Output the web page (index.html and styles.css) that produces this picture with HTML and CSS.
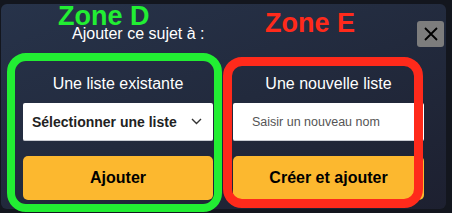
FILE: index.html
```html
<!DOCTYPE html>
<html lang="fr">
<head>
<meta charset="utf-8">
<link rel="stylesheet" href="styles.css">
</head>
<body>
<div class="modal">
  <div class="title">Ajouter ce sujet à :</div>
  <button class="close" aria-label="Fermer">
    <svg width="14" height="14" viewBox="0 0 14 14"><path d="M1 1 L13 13 M13 1 L1 13" stroke="#000" stroke-width="1.8" fill="none"/></svg>
  </button>
  <div class="columns">
    <div class="col">
      <div class="label">Une liste existante</div>
      <div class="select">
        <span>Sélectionner une liste</span>
        <svg class="chev" width="11" height="7" viewBox="0 0 11 7"><path d="M1 1 L5.5 5.5 L10 1" stroke="#333" stroke-width="1.4" fill="none"/></svg>
      </div>
      <button class="btn">Ajouter</button>
    </div>
    <div class="col">
      <div class="label">Une nouvelle liste</div>
      <div class="input">Saisir un nouveau nom</div>
      <button class="btn">Créer et ajouter</button>
    </div>
  </div>
</div>
<div class="zone zone-d"></div>
<div class="zone zone-e"></div>
<div class="zlabel zlabel-d">Zone D</div>
<div class="zlabel zlabel-e">Zone E</div>
</body>
</html>
```
FILE: styles.css
```css
html, body {
  margin: 0;
  padding: 0;
}
body {
  width: 452px;
  height: 213px;
  background: #13161e;
  font-family: "Liberation Sans", Arial, sans-serif;
  position: relative;
  overflow: hidden;
  padding: 4px 0 0 1px;
  box-sizing: border-box;
}
.modal {
  position: relative;
  width: 445px;
  height: 205px;
  box-sizing: border-box;
  border-radius: 6px;
  background: linear-gradient(160deg, #27334a 0%, #222a3d 50%, #1d2030 100%);
  padding: 22px 22px 10px 22px;
}
.title {
  color: #fff;
  font-size: 16px;
  line-height: 16px;
  padding-left: 49px;
}
.close {
  position: absolute;
  right: 2px;
  top: 17px;
  width: 27px;
  height: 26px;
  border: 0;
  border-radius: 3px;
  background: #7d7d7d;
  padding: 0;
  display: flex;
  align-items: center;
  justify-content: center;
}
.columns {
  display: flex;
  gap: 20px;
  margin-top: 32px;
}
.col {
  display: flex;
  flex-direction: column;
  width: 190px;
}
.col + .col {
  width: 191px;
}
.label {
  color: #fff;
  font-size: 16px;
  line-height: 20px;
  text-align: center;
}
.select, .input {
  margin-top: 9px;
  height: 38px;
  box-sizing: border-box;
  background: #fff;
  border-radius: 2px;
  border-bottom: 1px solid #c9ccd3;
  display: flex;
  align-items: center;
}
.select {
  padding: 0 11px 0 9px;
  justify-content: space-between;
  font-weight: bold;
  font-size: 14px;
  color: #222;
}
.chev {
  display: block;
}
.input {
  padding-left: 19px;
  font-size: 12.5px;
  color: #555;
}
.btn {
  margin-top: 15px;
  height: 44px;
  border: 0;
  border-radius: 5px;
  background: #fcb82f;
  color: #000;
  font-family: "Liberation Sans", Arial, sans-serif;
  font-weight: bold;
  font-size: 16px;
  padding: 0;
}
.zone {
  position: absolute;
  box-sizing: border-box;
  border-radius: 19px;
}
.zone-d {
  left: 7px;
  top: 53px;
  width: 215px;
  height: 159px;
  border: 8px solid #22ee33;
}
.zone-e {
  left: 223px;
  top: 57px;
  width: 200px;
  height: 151px;
  border: 9px solid #ff2a1b;
}
.zlabel {
  position: absolute;
  font-weight: bold;
  font-size: 27px;
  line-height: 20px;
}
.zlabel-d {
  left: 58px;
  top: 6px;
  color: #22ee33;
}
.zlabel-e {
  left: 265px;
  top: 13px;
  color: #ff2a1b;
}
```
